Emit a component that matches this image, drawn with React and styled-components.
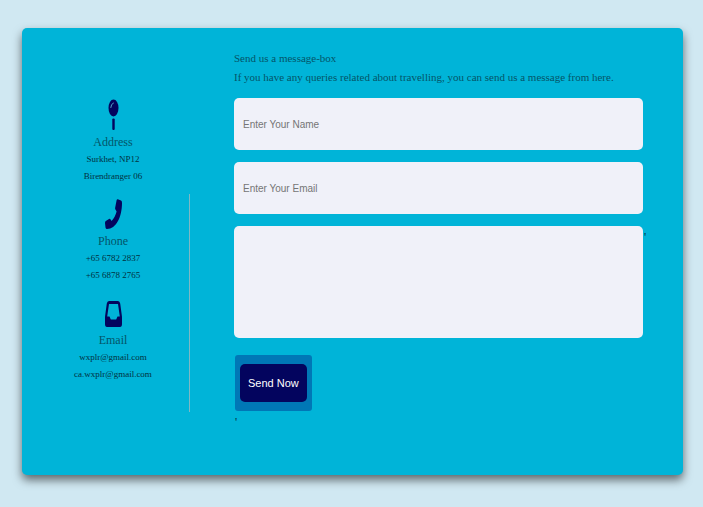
import React from "react";
import styled, { createGlobalStyle } from "styled-components";

const GlobalStyle = createGlobalStyle`
  * { box-sizing: border-box; }
  html { background: #d0e8f2; }
  body { margin: 0; font-family: "Liberation Serif", serif; color: #045468; }
`;

const Page = styled.main`
  padding: 28px 20px 32px 22px;
`;

const Card = styled.section`
  display: grid;
  grid-template-columns: 168px minmax(0, 1fr);
  column-gap: 44px;
  padding: 21px 40px 47px 0;
  background: #00b4d8;
  border-radius: 5px;
  box-shadow: 0 5px 10px rgba(0, 0, 0, 0.55);
`;

const Contacts = styled.aside`
  display: flex;
  flex-direction: column;
  gap: 13px;
  padding: 50px 0 0 14px;
  margin-bottom: 16px;
  position: relative;

  &::after {
    content: "";
    position: absolute;
    right: 0;
    bottom: 0;
    width: 1px;
    height: 218px;
    background: #7fb8c4;
  }
`;

const Contact = styled.address`
  display: flex;
  flex-direction: column;
  align-items: center;
  font-style: normal;
  text-align: center;
`;

const Icon = styled.svg`
  width: 17px;
  height: 31px;
  color: #03045e;
  fill: currentColor;
`;

const ContactTitle = styled.h2`
  margin: 3px 0 0;
  font-size: 12px;
  font-weight: 400;
  line-height: 18px;
`;

const ContactLine = styled.span`
  font-size: 9px;
  line-height: 17px;
  color: #02313f;
`;

const Message = styled.form`
  display: flex;
  flex-direction: column;
  align-items: flex-start;
`;

const Intro = styled.p`
  margin: 0;
  font-size: 11px;
  line-height: 19px;
`;

const fieldFont = `"Liberation Sans", sans-serif`;

const Fields = styled.div`
  display: flex;
  flex-direction: column;
  gap: 12px;
  width: 100%;
  margin-top: 11px;
`;

const Field = styled.input`
  width: 100%;
  height: 52px;
  padding: 0 9px;
  border: 0;
  border-radius: 5px;
  background: #f0f1f9;
  font: 10px ${fieldFont};
  color: #333;

  &::placeholder { color: #757575; opacity: 1; }
`;

const AreaRow = styled.div`
  display: flex;
`;

const Area = styled.textarea`
  flex: 1 0 100%;
  height: 112px;
  padding: 9px;
  border: 0;
  border-radius: 5px;
  background: #f0f1f9;
  font: 10px ${fieldFont};
  resize: none;
`;

const Mark = styled.span`
  padding: 5px 1px 0;
  font-size: 12px;
  line-height: 12px;
  color: #02313f;
`;

const ButtonFrame = styled.div`
  margin: 17px 0 0 1px;
  padding: 9px 5px;
  border-radius: 3px;
  background: #0077b6;
`;

const SendButton = styled.button`
  display: block;
  height: 38px;
  padding: 0 8px;
  border: 0;
  border-radius: 5px;
  background: #03045e;
  color: #fff;
  font: 11px ${fieldFont};
  cursor: pointer;
`;

const PinIcon = () => (
  <Icon viewBox="0 0 17 31" aria-hidden="true">
    <ellipse cx="8.5" cy="9" rx="5" ry="8.5" />
    <rect x="7.3" y="19.5" width="2.4" height="11.5" rx="1" />
    <path d="M5.8 8.5Q6 4.8 8.4 4" fill="none" stroke="#5fb4d6" strokeWidth="0.9" strokeLinecap="round" />
  </Icon>
);

const PhoneIcon = () => (
  <Icon viewBox="0 -1 17 31" aria-hidden="true">
    <path d="M12.8.3L16 1.6Q17 2 17 4C17 18 11 30 2 30Q.8 30 .5 28.5L0 24Q0 22.3 .8 21.9L4 20Q5 19.5 5.6 20.5L6.6 22C8.8 19.5 10.8 16 11.6 12.5L10.6 10.8Q10 10 10.1 9L11.6 1.3Q12 0 12.8 .3Z" />
  </Icon>
);

const InboxIcon = () => (
  <Icon viewBox="0 -2 17 31" aria-hidden="true">
    <path
      fillRule="evenodd"
      d="M4 2H13Q14.8 2 15.2 4.5L16.9 17Q17 18 17 19V25Q17 28 15 28H2Q0 28 0 25V19Q0 18 .1 17L1.8 4.5Q2.2 2 4 2ZM4 5L2.2 17.5H4.5L5.8 20.5H11.2L12.5 17.5H14.8L13 5Z"
    />
  </Icon>
);

const contacts = [
  { title: "Address", Symbol: PinIcon, lines: ["Surkhet, NP12", "Birendranger 06"] },
  { title: "Phone", Symbol: PhoneIcon, lines: ["+65 6782 2837", "+65 6878 2765"] },
  { title: "Email", Symbol: InboxIcon, lines: ["wxplr@gmail.com", "ca.wxplr@gmail.com"] },
];

export default function App() {
  return (
    <Page>
      <GlobalStyle />
      <Card>
        <Contacts>
          {contacts.map(({ title, Symbol, lines }) => (
            <Contact key={title}>
              <Symbol />
              <ContactTitle>{title}</ContactTitle>
              {lines.map((line) => (
                <ContactLine key={line}>{line}</ContactLine>
              ))}
            </Contact>
          ))}
        </Contacts>
        <Message onSubmit={(e) => e.preventDefault()}>
          <Intro>Send us a message-box</Intro>
          <Intro>
            If you have any queries related about travelling, you can send us a message from here.
          </Intro>
          <Fields>
            <Field type="text" placeholder="Enter Your Name" aria-label="Your name" />
            <Field type="email" placeholder="Enter Your Email" aria-label="Your email" />
            <AreaRow>
              <Area aria-label="Message" />
              <Mark>'</Mark>
            </AreaRow>
          </Fields>
          <ButtonFrame>
            <SendButton type="submit">Send Now</SendButton>
          </ButtonFrame>
          <Mark>'</Mark>
        </Message>
      </Card>
    </Page>
  );
}
